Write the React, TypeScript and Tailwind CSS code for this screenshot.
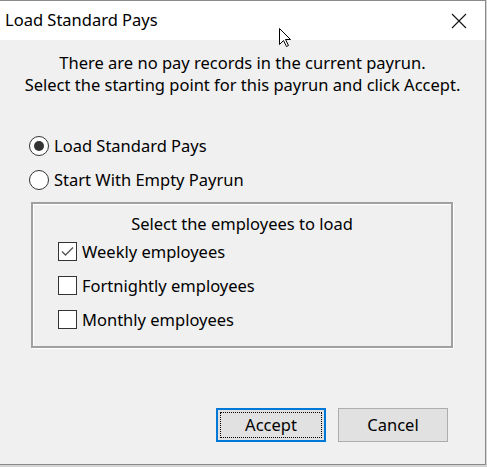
import React from 'react'

const font = { fontFamily: '"Noto Sans", "Open Sans", sans-serif' }

function Radio({ checked, label }: { checked?: boolean; label: string }) {
  return (
    <div className="flex items-center h-[20px]">
      <span className="w-[20px] h-[20px] rounded-full border border-[#333] bg-white flex items-center justify-center shrink-0">
        {checked && <span className="w-[10px] h-[10px] rounded-full bg-[#333]" />}
      </span>
      <span className="ml-[5px] text-[16.5px] leading-[20px] text-black">{label}</span>
    </div>
  )
}

function Check({ checked, label }: { checked?: boolean; label: string }) {
  return (
    <div className="flex items-center h-[19px]">
      <span className="w-[19px] h-[19px] border border-[#333] bg-white flex items-center justify-center shrink-0">
        {checked && (
          <svg width="15" height="15" viewBox="0 0 15 15">
            <path d="M2 7.5 L5.5 11 L13 3.5" fill="none" stroke="#555" strokeWidth="1.3" />
          </svg>
        )}
      </span>
      <span className="ml-[5px] text-[16.5px] leading-[20px] text-black">{label}</span>
    </div>
  )
}

export default function App() {
  return (
    <div className="w-[487px] h-[467px] bg-[#d4d4d4] relative" style={font}>
      <div className="w-[486px] h-[465px] border-t border-r border-b border-[#8a8a8a] flex flex-col bg-[#f0f0f0]">
        {/* Title bar */}
        <div className="h-[39px] bg-white flex items-center justify-between pl-[5px] pr-[18px] shrink-0">
          <span className="text-[16.5px] text-black">Load Standard Pays</span>
          <svg width="16" height="16" viewBox="0 0 16 16">
            <path d="M1 1 L15 15 M15 1 L1 15" stroke="#111" strokeWidth="1.1" />
          </svg>
        </div>

        {/* Body */}
        <div className="flex-1 flex flex-col">
          <div className="pt-[12px] text-center text-[16.5px] leading-[22px] text-black">
            <div>There are no pay records in the current payrun.</div>
            <div>Select the starting point for this payrun and click Accept.</div>
          </div>

          <div className="mt-[40px] pl-[29px] flex flex-col gap-[14px]">
            <Radio checked label="Load Standard Pays" />
            <Radio label="Start With Empty Payrun" />
          </div>

          <div className="mt-[12px] ml-[31px] w-[422px] h-[146px] border-2 border-[#a0a0a0] shadow-[inset_1px_1px_0_#fff,1px_1px_0_#fff] pl-[25px] pt-[10px]">
            <div className="text-center text-[16.5px] leading-[20px] text-black pr-[25px]">Select the employees to load</div>
            <div className="mt-[8px] flex flex-col gap-[15px]">
              <Check checked label="Weekly employees" />
              <Check label="Fortnightly employees" />
              <Check label="Monthly employees" />
            </div>
          </div>

          <div className="mt-auto mb-[22px] flex justify-end gap-[12px] pr-[37px]">
            <button className="w-[110px] h-[34px] border-2 border-[#0078d7] bg-[#e1e1e1] p-[2px]">
              <span className="w-full h-full flex items-center justify-center border border-dotted border-black text-[16.5px] text-black">Accept</span>
            </button>
            <button className="w-[110px] h-[34px] border border-[#adadad] bg-[#e1e1e1] flex items-center justify-center text-[16.5px] text-black">Cancel</button>
          </div>
        </div>
      </div>

      {/* Mouse cursor */}
      <svg className="absolute left-[279px] top-[28px]" width="14" height="20" viewBox="0 0 14 20">
        <path d="M0.5 0.5 L0.5 16.5 L4.5 12.5 L7.5 18.5 L9.5 17.5 L6.5 11.5 L11.5 11.5 Z" fill="#fff" stroke="#000" strokeWidth="1" strokeLinejoin="miter" />
      </svg>
    </div>
  )
}
